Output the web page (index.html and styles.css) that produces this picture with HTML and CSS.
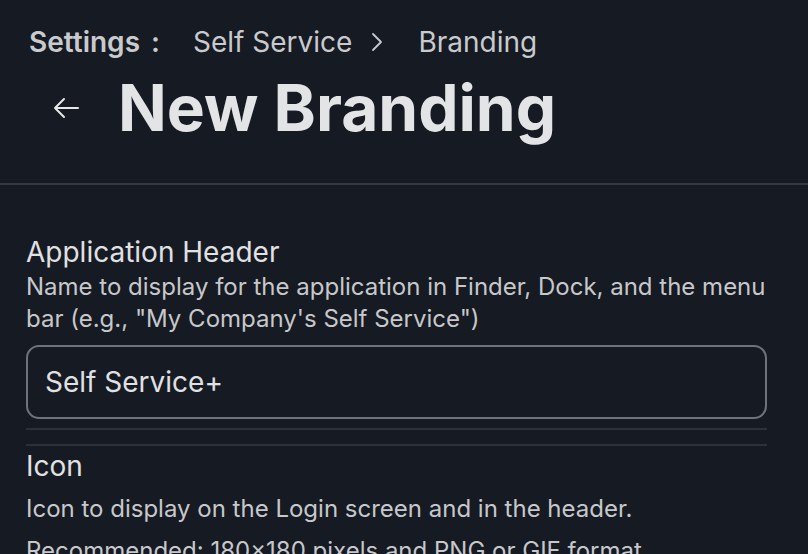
FILE: index.html
```html
<!DOCTYPE html>
<html>
<head>
<meta charset="utf-8">
<link rel="stylesheet" href="styles.css">
</head>
<body>
<header class="top">
  <nav class="crumbs">
    <span class="crumb-root">Settings</span>
    <span class="crumb-colon">:</span>
    <span class="crumb">Self Service</span>
    <svg class="chev" width="14" height="22" viewBox="0 0 14 22"><path d="M3 3 L11 11 L3 19" fill="none" stroke="currentColor" stroke-width="1.8" stroke-linecap="round" stroke-linejoin="round"/></svg>
    <span class="crumb">Branding</span>
  </nav>
  <div class="title-row">
    <svg class="back" width="30" height="24" viewBox="0 0 30 24"><path d="M27 12 H4 M13 3 L4 12 L13 21" fill="none" stroke="currentColor" stroke-width="2" stroke-linecap="round" stroke-linejoin="round"/></svg>
    <h1 class="title">New Branding</h1>
  </div>
</header>
<main class="content">
  <section class="field">
    <h2 class="label">Application Header</h2>
    <p class="desc">Name to display for the application in Finder, Dock, and the menu bar (e.g., "My Company's Self Service")</p>
    <div class="input">Self Service+</div>
  </section>
  <hr class="sep">
  <hr class="sep sep2">
  <section class="field field-icon">
    <h2 class="label">Icon</h2>
    <p class="desc desc-gap">Icon to display on the Login screen and in the header.</p>
    <p class="desc desc-gap">Recommended: 180x180 pixels and PNG or GIF format.</p>
  </section>
</main>
</body>
</html>
```
FILE: styles.css
```css
html, body {
  margin: 0;
  padding: 0;
  background: #161a22;
  height: 100%;
  overflow: hidden;
}
body {
  font-family: Inter, "Noto Sans", sans-serif;
  color: #d6d8dc;
}
.top {
  padding: 22px 0 0 0;
  border-bottom: 2px solid #363a42;
  height: 161px;
}
.crumbs {
  display: flex;
  align-items: center;
  padding-left: 29px;
  font-size: 28px;
  line-height: 40px;
  color: #c8cace;
}
.crumb-root {
  font-weight: 600;
}
.crumb-colon {
  font-weight: 600;
  margin-left: 11px;
  margin-right: 33px;
}
.chev {
  margin: 0 34px 0 18px;
  color: #c8cace;
}
.title-row {
  display: flex;
  align-items: center;
  padding-left: 51px;
  margin-top: 4px;
}
.back {
  color: #e6e7e9;
  margin-right: 37px;
}
.title {
  margin: 0;
  font-size: 64px;
  font-weight: 700;
  line-height: 84px;
  color: #e3e4e6;
}
.content {
  padding: 50px 41px 0 26px;
}
.label {
  margin: 0;
  font-size: 28px;
  font-weight: 400;
  line-height: 34px;
  color: #e0e1e4;
}
.desc {
  margin: 0;
  font-size: 24px;
  line-height: 32px;
  color: #c6c8cc;
  padding-top: 2px;
}
.input {
  margin-top: 10px;
  height: 70px;
  border: 2px solid #6e727a;
  border-radius: 13px;
  display: flex;
  align-items: center;
  padding-left: 17px;
  font-size: 28px;
  color: #e0e1e4;
}
.sep {
  border: 0;
  height: 2px;
  background: #2c3038;
  margin: 9px 0 0 0;
}
.sep2 {
  margin-top: 14px;
}
.field-icon {
  padding-top: 3px;
}
.desc-gap {
  margin-top: 8px;
}
```
